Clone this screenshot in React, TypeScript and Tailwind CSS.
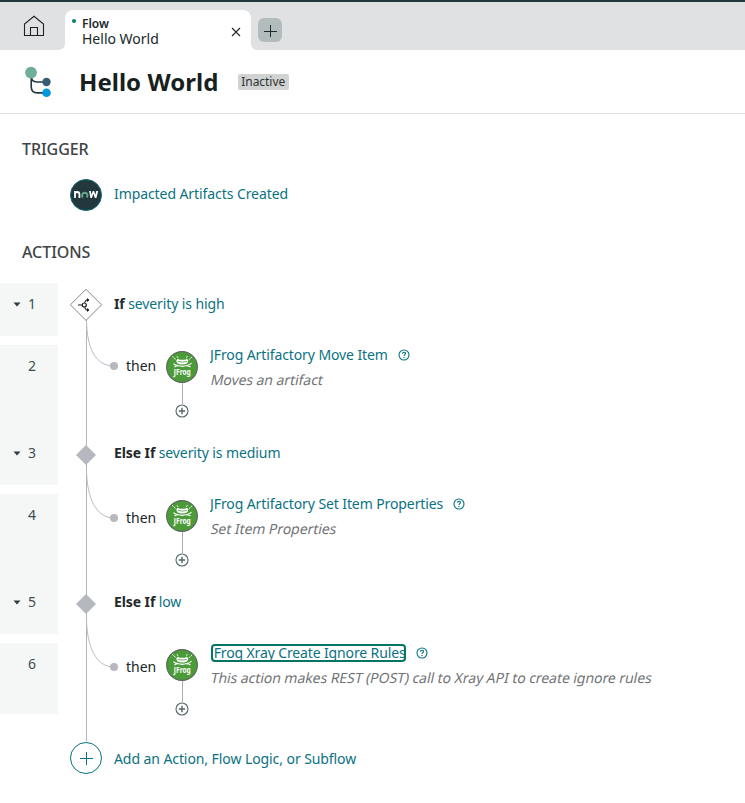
import React from "react";

type Step = {
  keyword: string;
  condition: string;
  title: string;
  description: string;
  thenPad: string;
  dotY: number;
  first?: boolean;
  focused?: boolean;
};

const STEPS: Step[] = [
  { keyword: "If", condition: "severity is high", title: "JFrog Artifactory Move Item", description: "Moves an artifact", thenPad: "pt-[31px]", dotY: 83, first: true },
  { keyword: "Else If", condition: "severity is medium", title: "JFrog Artifactory Set Item Properties", description: "Set Item Properties", thenPad: "pt-[34px]", dotY: 86 },
  { keyword: "Else If", condition: "low", title: "JFrog Xray Create Ignore Rules", description: "This action makes REST (POST) call to Xray API to create ignore rules", thenPad: "pt-[34px]", dotY: 86, focused: true },
];

function HomeIcon() {
  return (
    <svg width="22" height="22" viewBox="0 0 22 22" fill="none" stroke="#1b2526" strokeWidth="1.1">
      <path d="M1.5 20.5V9L11 1.2L20.5 9V20.5Z" />
      <path d="M7.5 20.5V12.5H14.5V20.5" />
    </svg>
  );
}

function FlowIcon() {
  return (
    <svg width="28" height="32" viewBox="0 0 28 32" fill="none">
      <path d="M6.2 8V20.5Q6.2 26.9 12.5 26.9H20M6.2 10Q6.2 16 12 16H20" stroke="#26393d" strokeWidth="1.6" />
      <circle cx="6" cy="6.6" r="5.9" fill="#6fae98" />
      <circle cx="21.5" cy="16" r="4.2" fill="#365d75" />
      <circle cx="21.5" cy="26.7" r="4.3" fill="#0097dc" />
    </svg>
  );
}

function NowLogo() {
  return (
    <svg width="32" height="32" viewBox="0 0 32 32" fill="none">
      <circle cx="16" cy="16" r="15.5" fill="#23383c" stroke="#156876" strokeWidth="1" />
      <path d="M5 19V12M5 15.4C5 12.2 9.4 12.2 9.4 15.4V19" stroke="#fff" strokeWidth="1.8" />
      <path d="M13 18.4A2.7 2.7 0 1 1 16.6 18.4" stroke="#63a98e" strokeWidth="1.9" />
      <path d="M19.1 12L20.4 19H21.9L23.4 14.8L24.9 19H26.4L28.2 12H26.3L25.4 15.8L24.2 12H22.7L21.4 15.8L20.8 12Z" fill="#fff" />
    </svg>
  );
}

function JFrogLogo() {
  return (
    <svg width="32" height="32" viewBox="0 0 32 32" fill="none">
      <circle cx="16" cy="16" r="15.4" fill="#4b9c38" stroke="#5f6660" strokeWidth="1.1" />
      <path d="M10.4 9.3Q11.8 7.3 13.5 8.7H19.2Q20.8 7.3 22.2 9.3Q22.4 13.6 16.3 13.6Q10.2 13.6 10.4 9.3Z" fill="#fff" />
      <path d="M11.8 10.4Q16.3 11.8 20.8 10.4" stroke="#4b9c38" strokeWidth="0.8" />
      <path d="M6.2 5.2L10.2 9M26.2 5.8L22.4 9.2M11 5.2L12.3 7.5M21.4 5L20.2 7.5" stroke="#fff" strokeWidth="0.9" strokeDasharray="2 0.5" />
      <path d="M7.5 12.6Q9 14.2 12 14.6M25.5 12Q24 14 20.8 14.6M8.5 16Q11 13.9 16.3 15.3Q21.5 13.9 24.5 16" stroke="#fff" strokeWidth="1.2" />
      <text x="16.3" y="24" textAnchor="middle" textLength="17" lengthAdjust="spacingAndGlyphs" fill="#fff" fontFamily="Noto Sans" fontWeight="700" fontSize="9">JFrog</text>
    </svg>
  );
}

function CirclePlus() {
  return (
    <svg width="14" height="14" viewBox="0 0 14 14" fill="none" stroke="#53666a">
      <circle cx="7" cy="7" r="6" strokeWidth="1.1" />
      <path d="M7 3.8V10.2M3.8 7H10.2" strokeWidth="1.4" />
    </svg>
  );
}

function HelpIcon() {
  return (
    <svg className="shrink-0" width="12" height="12" viewBox="0 0 12 12" fill="none" stroke="#0a7282">
      <circle cx="6" cy="6" r="5" strokeWidth="1.1" />
      <path d="M4.5 4.8C4.5 2.8 7.5 2.8 7.5 4.6C7.5 5.6 6 5.7 6 7M6 8V9.1" strokeWidth="1.2" />
    </svg>
  );
}

/* Vertical line, condition node and the curve leading to the branch. */
function Rail({ first, dotY }: { first?: boolean; dotY: number }) {
  return (
    <svg className="shrink-0" width="56" height="149" viewBox="0 0 56 149" fill="none">
      <path d={first ? "M28.5 37V149" : "M28.5 0V149"} stroke="#b1b5bb" />
      <path d={`M28.5 38C29 66 38 ${dotY} 56 ${dotY}`} stroke="#b9bcc1" />
      {first ? (
        <>
          <path d="M28 6.3L43.6 21.8L28 37.4L12.4 21.8Z" fill="#fff" stroke="#85888b" />
          <path d="M20 22H25M26.5 19.5L28.5 17H31M26.5 24.5L28.5 27H31" stroke="#161b1d" strokeWidth="1.2" />
          <circle cx="26.3" cy="22" r="2" stroke="#161b1d" strokeWidth="1.2" />
          <path d="M29 15L31.3 17L29 19ZM29 25L31.3 27L29 29Z" fill="#161b1d" />
        </>
      ) : (
        <path d="M28 13L38 23L28 33L18 23Z" fill="#b5b8be" />
      )}
    </svg>
  );
}

function Group({ step }: { step: Step }) {
  return (
    <div className="flex h-[149px]">
      <Rail first={step.first} dotY={step.dotY} />
      <div className="min-w-0 flex-1">
        <div className="flex h-[42px] items-center gap-[3.5px] text-[14px] leading-5 tracking-[-0.1px] whitespace-nowrap">
          <b className="font-bold text-[#24292b]">{step.keyword}</b>
          <span className="text-[#0a7282]">{step.condition}</span>
        </div>
        <div className="flex">
          <div className={`flex w-[52px] items-start ${step.thenPad}`}>
            <i className="-ml-1 mt-[6px] mr-2 size-2 shrink-0 rounded-full bg-[#b5b8be]" />
            <span className="text-[14px] leading-5 text-[#202729]">then</span>
          </div>
          <div className="flex w-[32px] flex-col items-center pt-[26px]">
            <JFrogLogo />
            <i className="ml-px h-[21px] w-px bg-[#a9adb3]" />
            <CirclePlus />
          </div>
          <div className="pt-[20px] pl-[12px] whitespace-nowrap">
            <div className="flex h-5 items-center text-[14px] leading-5 tracking-[-0.1px] text-[#0a7282]">
              {step.focused ? (
                <span className="ml-[1px] flex h-[18px] w-[195px] items-center overflow-hidden rounded-[4px] border-2 border-[#047564]">
                  <span className="-ml-[3px] tracking-[-0.13px] underline underline-offset-2">{step.title}</span>
                </span>
              ) : (
                <span className="overflow-hidden">{step.title}</span>
              )}
              <span className="ml-[10px]"><HelpIcon /></span>
            </div>
            <div className="mt-[5px] ml-px w-max -skew-x-12 text-[14px] leading-5 tracking-[-0.06px] text-[#717476]">{step.description}</div>
          </div>
        </div>
      </div>
    </div>
  );
}

function LineNumber({ n, caret }: { n: number; caret?: boolean }) {
  return (
    <div className="flex h-[42px] items-center justify-end pr-[22px] pb-[2px] text-[14px] text-[#3d4f52]">
      {caret && (
        <svg className="mt-[2px] mr-[7px]" width="8" height="5" viewBox="0 0 8 5"><path d="M0.5 0.5H7.5L4 4.5Z" fill="#2b3d41" /></svg>
      )}
      {n}
    </div>
  );
}

export default function App() {
  return (
    <main className="flex h-[803px] w-[745px] flex-col overflow-hidden bg-white font-['Noto_Sans',sans-serif] text-[#202729]">
      <header className="flex h-[50px] border-t-2 border-[#23383b] bg-[#e0e1e3]">
        <div className="flex w-[65px] justify-center pt-[13px] pl-[3px]"><HomeIcon /></div>
        <div className="relative flex h-[40px] w-[186px] self-end rounded-t-[8px] bg-white pl-[7px]">
          {/* Flared feet of the active tab */}
          <svg className="absolute bottom-0 -left-[7px]" width="7" height="7" viewBox="0 0 7 7"><path d="M7 0V7H0Q7 7 7 0Z" fill="#fff" /></svg>
          <svg className="absolute -right-[7px] bottom-0" width="7" height="7" viewBox="0 0 7 7"><path d="M0 0V7H7Q0 7 0 0Z" fill="#fff" /></svg>
          <i className="mt-[9px] size-1 rounded-full bg-[#008466]" />
          <div className="ml-[6px] flex-1 pt-[6px] text-[14px]">
            <div className="text-[12px] leading-[15px] font-semibold">Flow</div>
            <div className="leading-4">Hello World</div>
          </div>
          <svg className="mt-[17px] mr-[10px]" width="10" height="10" viewBox="0 0 10 10" stroke="#202729" strokeWidth="1.1"><path d="M1 1L9 9M9 1L1 9" /></svg>
        </div>
        <div className="mt-[16px] ml-[7px] flex size-6 items-center justify-center rounded-[6px] bg-[#b3bcbd]">
          <svg width="14" height="14" viewBox="0 0 14 14" stroke="#1d292c"><path d="M7.5 2V15M1 8.5H14" /></svg>
        </div>
      </header>
      <section className="flex h-[64px] items-center border-b border-[#dfe1e2] pl-[25px]">
        <FlowIcon />
        <h1 className="ml-[26px] text-[24px] leading-8 font-bold tracking-[0.03px] text-[#181f21]">Hello World</h1>
        <span className="mt-[1px] ml-[19.4px] flex h-4 w-[51px] items-center justify-center rounded-[2px] bg-[#d1d2d2] text-[12px] tracking-[-0.05px] text-[#2d3233]">Inactive</span>
      </section>
      <section className="pl-[22px]">
        <h2 className="mt-[25px] text-[16px] leading-5 font-medium tracking-[-0.06px] text-[#404445]">TRIGGER</h2>
        <div className="mt-[20px] ml-[48px] flex h-8 items-center gap-3 text-[14px] leading-5 tracking-[-0.08px] text-[#0a7282]">
          <NowLogo />
          <span className="-mt-[2px] overflow-hidden">Impacted Artifacts Created</span>
        </div>
        <h2 className="mt-[31px] text-[16px] leading-5 font-medium tracking-[-0.06px] text-[#404445]">ACTIONS</h2>
      </section>
      <section className="mt-[21px] flex flex-1">
        <div className="flex w-[58px] flex-col gap-[9px]">
          <div className="h-[53px] bg-[#f5f7f7]"><LineNumber n={1} caret /></div>
          <div className="flex h-[140px] flex-col justify-between bg-[#f5f7f7] pb-[11px]"><LineNumber n={2} /><LineNumber n={3} caret /></div>
          <div className="flex h-[140px] flex-col justify-between bg-[#f5f7f7] pb-[11px]"><LineNumber n={4} /><LineNumber n={5} caret /></div>
          <div className="h-[71px] bg-[#f5f7f7]"><LineNumber n={6} /></div>
        </div>
        <div className="flex-1">
          {STEPS.map((step) => <Group key={step.title} step={step} />)}
          <div className="flex">
            <svg className="shrink-0" width="56" height="62" viewBox="0 0 56 62" fill="none">
              <path d="M28.5 0V11" stroke="#b1b5bb" />
              <circle cx="28" cy="28" r="15.5" stroke="#0a7282" fill="#fff" />
              <path d="M28.5 22V35M22 28.5H35" stroke="#0a7282" />
            </svg>
            <span className="pt-[19px] text-[14px] leading-5 tracking-[-0.08px] text-[#0a7282]">Add an Action, Flow Logic, or Subflow</span>
          </div>
        </div>
      </section>
    </main>
  );
}
